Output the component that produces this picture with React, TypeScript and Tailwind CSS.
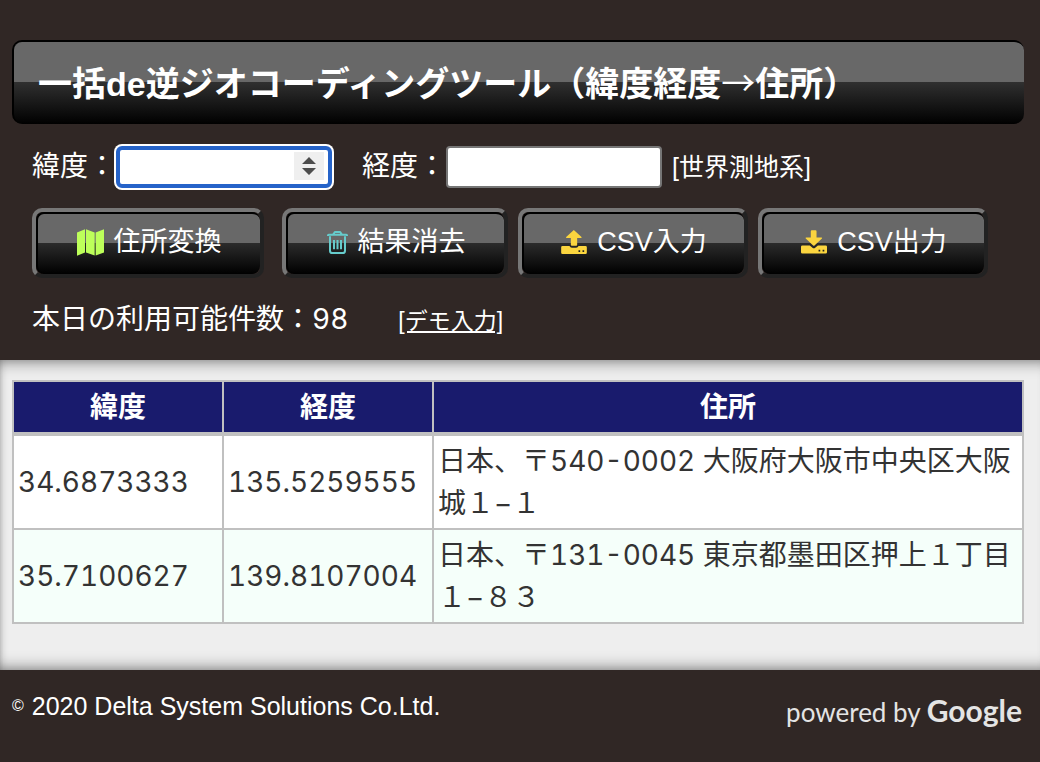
import { useState } from "react";
import type { ReactNode } from "react";

const rows = [
  { lat: "34.6873333", lng: "135.5259555", address: "日本、〒540-0002 大阪府大阪市中央区大阪城１−１" },
  { lat: "35.7100627", lng: "139.8107004", address: "日本、〒131-0045 東京都墨田区押上１丁目１−８３" },
];

function MapIcon() {
  return (
    <svg viewBox="0 0 81 80" className="size-[27px] fill-[#bdff5a]" aria-hidden="true">
      <path d="M0 10 24 0v70L0 80zM27 0l26 10v69L27 70zM56 10 81 0v70L56 79z" />
    </svg>
  );
}

function TrashIcon() {
  return (
    <svg viewBox="0 0 63 69" className="h-[23px] w-[21px] fill-none stroke-[#66cccc] stroke-[6]" aria-hidden="true">
      <path d="M3 15v-2q0-2 2-2h53q2 0 2 2v2M19 10l3-5q1-2 3-2h13q2 0 3 2l3 5M9 16v43q0 7 7 7h31q7 0 7-7V16M21 27v28M31.500 27v28M42 27v28" />
    </svg>
  );
}

function UploadIcon() {
  return (
    <svg viewBox="0 0 77 72" className="h-6 w-[26px] fill-[#fbd53f]" aria-hidden="true">
      <path d="M38 0 61 21q2 3-2 3H48v20q0 3-3 3H32q-3 0-3-3V24H17q-4 0-2-3z" />
      <path
        fillRule="evenodd"
        d="M4 48h21q2 5 7 5h13q5 0 7-5h21q4 0 4 4v16q0 4-4 4H4q-4 0-4-4V52q0-4 4-4zM52 61h5v5h-5zM64 61h5v5h-5z"
      />
    </svg>
  );
}

function DownloadIcon() {
  return (
    <svg viewBox="0 0 77 70" className="h-6 w-[26px] fill-[#fbd53f]" aria-hidden="true">
      <path d="M32 0h11q3 0 3 3v19h14q4 0 2 3L40 45q-2 2-4 0L14 25q-2-3 2-3h13V3q0-3 3-3z" />
      <path
        fillRule="evenodd"
        d="M4 45h22l8 7q4 3 8 0l8-7h23q4 0 4 4v16q0 4-4 4H4q-4 0-4-4V49q0-4 4-4zM52 58h5v5h-5zM64 58h5v5h-5z"
      />
    </svg>
  );
}

function ToolButton({ icon, children, className }: { icon: ReactNode; children: ReactNode; className: string }) {
  return (
    <button
      type="button"
      className={`rounded-[10px] border-4 border-t-[#777] border-r-[#222] border-b-[#222] border-l-[#777] text-[27px] ${className}`}
    >
      <span className="flex h-[62px] items-center justify-center gap-[10px] rounded-lg border-t-2 border-l-2 border-black bg-[linear-gradient(to_bottom,#686868_0%,#686868_49%,#2b2b2b_49%,#000_100%)] pb-1">
        {icon}
        <span>{children}</span>
      </span>
    </button>
  );
}

export default function App() {
  const [lat, setLat] = useState("");
  const [lng, setLng] = useState("");

  return (
    <div className="min-h-screen bg-[#302725] font-['Liberation_Sans','Noto_Sans_CJK_JP',sans-serif] text-[28px] leading-[42px] text-white">
      <header className="pt-10 pr-4 pb-5 pl-3">
        <h1 className="flex h-21 items-center rounded-[10px] border-t-2 border-l-2 border-black bg-[linear-gradient(to_bottom,#686868_0%,#686868_49%,#303030_49%,#000_100%)] pl-6 text-[34px] font-bold">
          <span>
            一括de逆ジオコーディングツール（緯度経度
            <span className="font-['Noto_Sans_CJK_JP',sans-serif] font-normal">→</span>住所）
          </span>
        </h1>

        <div className="mt-[22px] flex items-center pl-5">
          <label htmlFor="lat">緯度：</label>
          <div className="relative">
            <input
              id="lat"
              type="text"
              inputMode="decimal"
              value={lat}
              onChange={(e) => setLat(e.target.value)}
              className="block h-[42px] w-54 rounded-md border-4 border-[#2563c9] bg-white pr-9 pl-1 text-black ring-2 ring-white outline-none"
            />
            <span className="pointer-events-none absolute top-[6px] right-2 flex h-7 w-[30px] items-center justify-center bg-[#efefef]">
              <svg viewBox="0 0 14 18" className="h-[18px] w-[14px] fill-[#4d4d4d]" aria-hidden="true">
                <path d="M7 0l7 7H0zM7 18l-7-7h14z" />
              </svg>
            </span>
          </div>
          <label htmlFor="lng" className="ml-[30px]">経度：</label>
          <input
            id="lng"
            type="text"
            inputMode="decimal"
            value={lng}
            onChange={(e) => setLng(e.target.value)}
            className="h-[42px] w-54 rounded-sm border-2 border-[#767676] bg-white px-1 text-black"
          />
          <span className="ml-[10px] text-[25px]">[世界測地系]</span>
        </div>

        <div className="mt-5 flex gap-[10px] pl-5">
          <ToolButton className="mr-2 w-58" icon={<MapIcon />}>住所変換</ToolButton>
          <ToolButton className="w-[226px]" icon={<TrashIcon />}>結果消去</ToolButton>
          <ToolButton className="w-[230px]" icon={<UploadIcon />}>CSV入力</ToolButton>
          <ToolButton className="w-[230px]" icon={<DownloadIcon />}>CSV出力</ToolButton>
        </div>

        <div className="mt-5 flex items-baseline gap-[50px] pl-5">
          <span className="font-['Inter','Noto_Sans_CJK_JP',sans-serif] tabular-nums">本日の利用可能件数：98</span>
          <a href="#demo" className="text-[23px] leading-none underline">[デモ入力]</a>
        </div>
      </header>

      <main className="bg-[#eee] pt-5 pr-4 pb-[46px] pl-3 shadow-[inset_0_16px_16px_-16px_#606060,inset_0_-16px_16px_-16px_#606060,inset_10px_0_10px_-12px_#707070]">
        <table className="w-full table-fixed border-collapse font-['Inter','Noto_Sans_CJK_JP',sans-serif] text-[#333] tabular-nums">
          <colgroup>
            <col className="w-[210px]" />
            <col className="w-[210px]" />
            <col />
          </colgroup>
          <thead>
            <tr className="bg-[#191b6d] text-white">
              <th className="border-2 border-b-4 border-[#c0c0c0] p-1">緯度</th>
              <th className="border-2 border-b-4 border-[#c0c0c0] p-1">経度</th>
              <th className="border-2 border-b-4 border-[#c0c0c0] p-1">住所</th>
            </tr>
          </thead>
          <tbody>
            {rows.map((r) => (
              <tr key={r.lat} className="bg-white even:bg-[#f5fffa]">
                <td className="border-2 border-[#c0c0c0] p-1">{r.lat}</td>
                <td className="border-2 border-[#c0c0c0] p-1">{r.lng}</td>
                <td className="border-2 border-[#c0c0c0] p-1">{r.address}</td>
              </tr>
            ))}
          </tbody>
        </table>
      </main>

      <footer className="flex items-start justify-between pt-[15px] pr-[18px] pb-5 pl-3">
        <small className="flex items-center gap-2 text-[25px] leading-[42px]">
          <span className="text-base">©</span>
          <span>2020 Delta System Solutions Co.Ltd.</span>
        </small>
        <p className="mt-[6px] font-['Lato',sans-serif] text-[26px] text-[#e4e4e4]">
          powered by <span className="text-[30px] leading-none font-bold">Google</span>
        </p>
      </footer>
    </div>
  );
}
